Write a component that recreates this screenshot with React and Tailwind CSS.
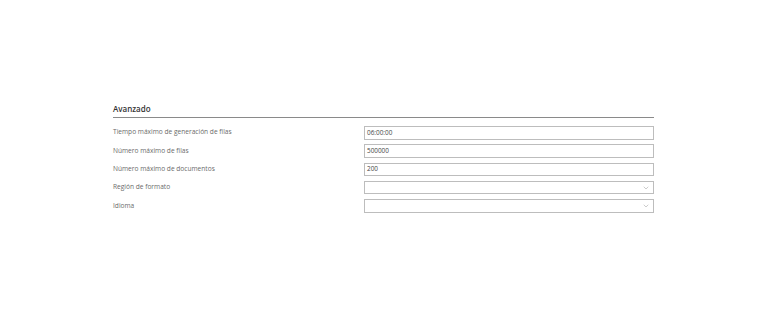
import { ChevronDown } from 'lucide-react';

const fields = [
  { label: 'Tiempo máximo de generación de filas', value: '06:00:00', type: 'input' },
  { label: 'Número máximo de filas', value: '500000', type: 'input' },
  { label: 'Número máximo de documentos', value: '200', type: 'input' },
  { label: 'Región de formato', value: '', type: 'select' },
  { label: 'Idioma', value: '', type: 'select' },
];

export default function App() {
  return (
    <div className="w-[768px] h-[321px] bg-white" style={{ fontFamily: '"Open Sans", "Noto Sans", sans-serif' }}>
      <div className="pt-[103px] pl-[113px] w-[654px]">
        {/* Header */}
        <h2 className="text-[8px] leading-[12px] font-semibold text-[#333]">Avanzado</h2>
        <div className="mt-[2px] border-t border-[#8a8a8a]" />

        {/* Rows */}
        <div className="mt-[8px] flex flex-col gap-[4.8px]">
          {fields.map((f) => (
            <div key={f.label} className="flex items-center h-[13.5px]">
              <div className="w-[251px] text-[6.6px] text-[#6b6b6b] leading-none">{f.label}</div>
              <div className="flex-1 h-full border border-[#bdbdbd] bg-white flex items-center justify-between pl-[2px] pr-[3px]">
                <span className="text-[6.4px] text-[#444] leading-none">{f.value}</span>
                {f.type === 'select' && <ChevronDown className="w-[8px] h-[8px] text-[#999]" strokeWidth={1.5} />}
              </div>
            </div>
          ))}
        </div>
      </div>
    </div>
  );
}
